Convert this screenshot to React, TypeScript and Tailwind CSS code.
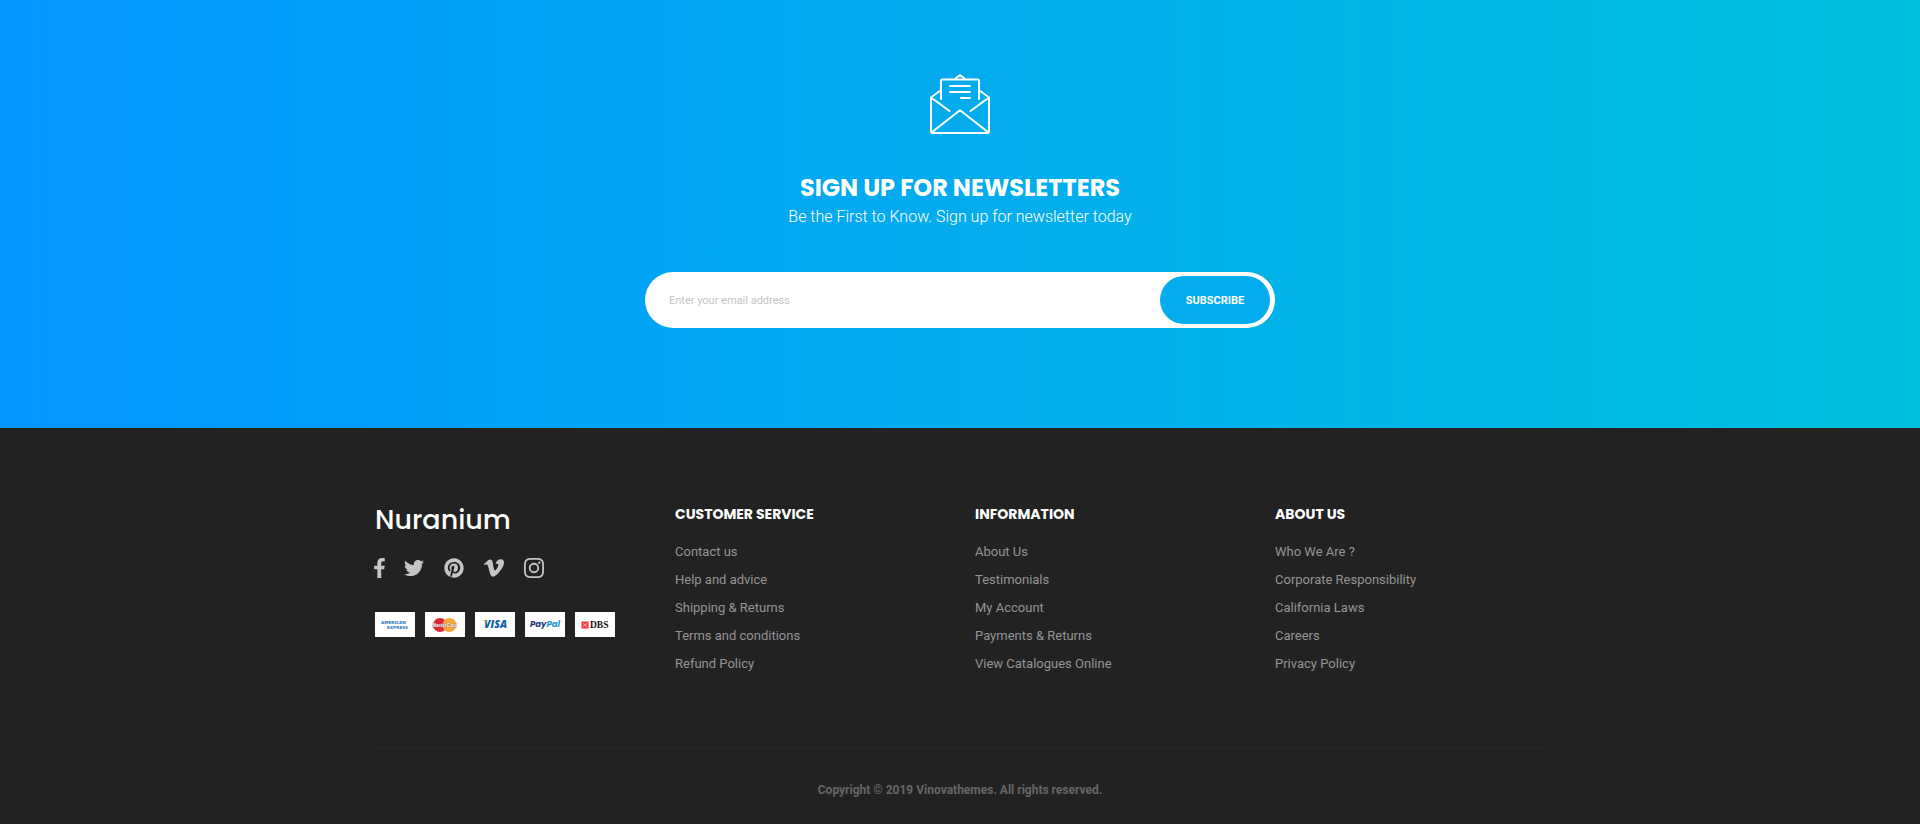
import type { ReactNode } from "react";
import { FaFacebookF, FaPinterest, FaTwitter } from "react-icons/fa";
import { SiInstagram, SiVimeo } from "react-icons/si";

type LinkColumn = { title: string; links: string[] };

const columns: LinkColumn[] = [
  {
    title: "CUSTOMER SERVICE",
    links: ["Contact us", "Help and advice", "Shipping & Returns", "Terms and conditions", "Refund Policy"],
  },
  {
    title: "INFORMATION",
    links: ["About Us", "Testimonials", "My Account", "Payments & Returns", "View Catalogues Online"],
  },
  {
    title: "ABOUT US",
    links: ["Who We Are ?", "Corporate Responsibility", "California Laws", "Careers", "Privacy Policy"],
  },
];

function EnvelopeIcon() {
  return (
    <svg
      viewBox="0 0 60 60"
      className="size-[60px]"
      fill="none"
      stroke="currentColor"
      strokeWidth="2"
      strokeLinecap="round"
      strokeLinejoin="round"
      aria-hidden="true"
    >
      <path d="M11 25V7a1.500 1.500 0 0 1 1.500-1.500h35A1.500 1.500 0 0 1 49 7v18" />
      <path d="M25.500 4.500 30 1l4.500 3.500" />
      <path d="M11 16 1 23.500V57.500a1.500 1.500 0 0 0 1.500 1.500h55a1.500 1.500 0 0 0 1.500-1.500V23.500L49 16" />
      <path d="M1 23.500 19.500 37M59 23.500 40.500 37M1.500 58.500 29 37q1-.8 2 0l27.500 21.500" />
      <path d="M20 12h20M20 18h20M31 24h9" />
    </svg>
  );
}

function Newsletter() {
  return (
    <section className="flex flex-col items-center bg-linear-to-r from-[#0597ff] from-5% via-[#04acee] to-[#00c1dc] px-4 pt-[74px] pb-[100px] text-white">
      <EnvelopeIcon />
      <h2 className="mt-[38px] text-center font-['Poppins',Inter,sans-serif] text-2xl leading-8 font-bold">
        SIGN UP FOR NEWSLETTERS
      </h2>
      <p className="text-center text-base leading-[26px] font-light">
        Be the First to Know. Sign up for newsletter today
      </p>
      <form
        className="mt-[42px] flex w-full max-w-[630px] rounded-full bg-white py-1 pr-[5px] pl-6"
        onSubmit={(event) => event.preventDefault()}
      >
        <input
          type="email"
          aria-label="Email address"
          placeholder="Enter your email address"
          className="min-w-0 flex-1 bg-transparent pt-0.5 text-[11px] text-[#222222] outline-none placeholder:text-[#c4c4c4]"
        />
        <button type="submit" className="h-12 w-[110px] rounded-full bg-[#04acee] pt-0.5 text-[11px] font-bold">
          SUBSCRIBE
        </button>
      </form>
    </section>
  );
}

function SocialLink({ label, children }: { label: string; children: ReactNode }) {
  return (
    <a href="#" aria-label={label} className="hover:text-white">
      {children}
    </a>
  );
}

function AmexCard() {
  return (
    <svg viewBox="0 0 40 25" className="h-[25px] w-10 bg-white" role="img" aria-label="American Express">
      <g fill="#2a76bc" fontFamily="DejaVu Sans, sans-serif" fontSize="4.200" fontWeight="700">
        <text x="6" y="11.500">AMERICAN</text>
        <text x="12" y="17">EXPRESS</text>
      </g>
    </svg>
  );
}

function MastercardCard() {
  return (
    <svg viewBox="0 0 40 25" className="h-[25px] w-10 bg-white" role="img" aria-label="MasterCard">
      <circle cx="15" cy="13" r="7" fill="#e0243a" />
      <circle cx="24.500" cy="13" r="7" fill="#f4a83c" />
      <text
        x="19.700"
        y="15"
        textAnchor="middle"
        fill="#ffffff"
        stroke="#8c3a3a"
        strokeWidth=".4"
        paintOrder="stroke"
        fontFamily="Liberation Sans, sans-serif"
        fontSize="4.500"
        fontWeight="700"
      >
        MasterCard
      </text>
    </svg>
  );
}

function VisaCard() {
  return (
    <svg viewBox="0 0 40 25" className="h-[25px] w-10 bg-white" role="img" aria-label="Visa">
      <text x="9" y="16" fill="#0c62ab" fontFamily="Open Sans, sans-serif" fontSize="10.500" fontWeight="800" fontStyle="italic">
        VISA
      </text>
      <path d="M7.500 8.300h3.200l1.300 4.500c-.8-2.200-2.200-3.600-4.500-4.500z" fill="#f4a83c" />
    </svg>
  );
}

function PaypalCard() {
  return (
    <svg viewBox="0 0 40 25" className="h-[25px] w-10 bg-white" role="img" aria-label="PayPal">
      <text x="5" y="15" fontFamily="Poppins, Open Sans, sans-serif" fontSize="8.500" fontWeight="700" fontStyle="italic">
        <tspan fill="#253b80">Pay</tspan>
        <tspan fill="#1f97d5">Pal</tspan>
      </text>
    </svg>
  );
}

function DbsCard() {
  return (
    <svg viewBox="0 0 40 25" className="h-[25px] w-10 bg-white" role="img" aria-label="DBS">
      <rect x="6.500" y="9.500" width="7" height="7" fill="#f5333f" />
      <path d="M7.500 10.500l2.500 1.500 2.500-1.500-1.500 2.500 1.500 2.500-2.500-1.500-2.500 1.500 1.500-2.500z" fill="#ffffff" opacity=".5" />
      <text x="15" y="16" fill="#111111" fontFamily="Liberation Serif, serif" fontSize="9.500" fontWeight="700">
        DBS
      </text>
    </svg>
  );
}

function Brand() {
  return (
    <div>
      <a href="#" className="block font-['Poppins',Inter,sans-serif] text-[27px] leading-9 font-medium text-white">
        Nuranium
      </a>
      <div className="mt-5 flex h-5 items-center text-[#c4c4c4]">
        <SocialLink label="Facebook">
          <FaFacebookF className="-ml-1 h-5 w-[17px]" />
        </SocialLink>
        <div className="ml-4 flex items-center gap-5">
          <SocialLink label="Twitter">
            <FaTwitter className="size-5" />
          </SocialLink>
          <SocialLink label="Pinterest">
            <FaPinterest className="size-5" />
          </SocialLink>
          <SocialLink label="Vimeo">
            <SiVimeo className="size-5" />
          </SocialLink>
          <SocialLink label="Instagram">
            <SiInstagram className="size-5" />
          </SocialLink>
        </div>
      </div>
      <div className="mt-[34px] flex gap-[10px]">
        <AmexCard />
        <MastercardCard />
        <VisaCard />
        <PaypalCard />
        <DbsCard />
      </div>
    </div>
  );
}

function Footer() {
  return (
    <footer className="bg-[#222222] px-4">
      <div className="mx-auto max-w-[1170px]">
        <div className="grid gap-[30px] pt-[74px] pb-[70px] sm:grid-cols-2 lg:grid-cols-4">
          <Brand />
          {columns.map((column) => (
            <nav key={column.title} aria-label={column.title}>
              <h3 className="font-['Poppins',Inter,sans-serif] text-sm leading-6 font-bold text-white">
                {column.title}
              </h3>
              <ul className="mt-3 text-[13px] leading-7 text-[#959595]">
                {column.links.map((link) => (
                  <li key={link}>
                    <a href="#" className="hover:text-white">
                      {link}
                    </a>
                  </li>
                ))}
              </ul>
            </nav>
          ))}
        </div>
        <p className="border-t border-[#2a2a2a] pt-[31px] pb-6 text-center text-xs leading-5 font-bold text-[#666666]">
          Copyright © 2019 Vinovathemes. All rights reserved.
        </p>
      </div>
    </footer>
  );
}

export default function App() {
  return (
    <div className="min-h-screen bg-[#222222] font-[Roboto,sans-serif]">
      <Newsletter />
      <Footer />
    </div>
  );
}
